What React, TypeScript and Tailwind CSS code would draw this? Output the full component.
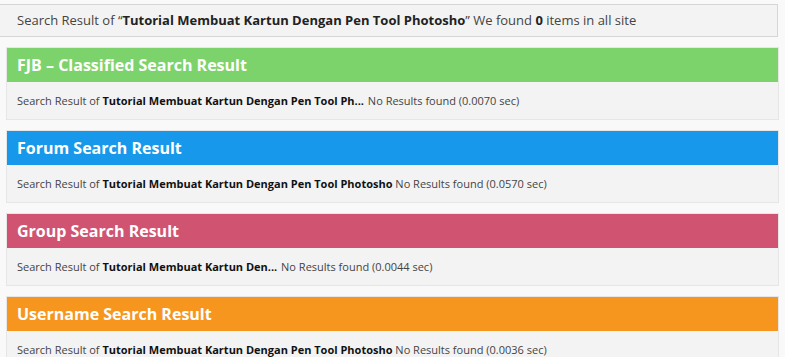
import React from "react";

const sections = [
  { title: "FJB – Classified Search Result", color: "bg-[#7dd36b]", query: "Tutorial Membuat Kartun Dengan Pen Tool Ph...", time: "0.0070", extra: true },
  { title: "Forum Search Result", color: "bg-[#1798ea]", query: "Tutorial Membuat Kartun Dengan Pen Tool Photosho", time: "0.0570", extra: false },
  { title: "Group Search Result", color: "bg-[#d05472]", query: "Tutorial Membuat Kartun Den...", time: "0.0044", extra: true },
  { title: "Username Search Result", color: "bg-[#f7961f]", query: "Tutorial Membuat Kartun Dengan Pen Tool Photosho", time: "0.0036", extra: false },
];

export default function App() {
  return (
    <div className="w-[785px] h-[357px] overflow-hidden bg-[#f9f9f9] text-[#333]" style={{ fontFamily: "'Open Sans', sans-serif" }}>
      <div className="pt-[4px] pr-[7px]">
        <div className="h-[33px] border border-l-0 border-[#d6d6d6] bg-[#f3f3f3] pl-[17px] flex items-center text-[13px] text-[#444]">
          <span>
            Search Result of “<b className="text-[#222]">Tutorial Membuat Kartun Dengan Pen Tool Photosho</b>” We found <b className="text-[#222]">0</b> items in all site
          </span>
        </div>
      </div>
      <div className="flex flex-col gap-[10px] pt-[10px] pl-[6px] pr-[6px]">
        {sections.map((s) => (
          <div key={s.title} className="border border-[#e6e6e6] bg-[#f3f3f3]">
            <div className={`${s.color} h-[34px] flex items-center pl-[10px] text-white font-bold text-[16px]`}>{s.title}</div>
            <div className="h-[37px] flex items-center pl-[10px] pt-[2px] text-[11px] text-[#444]">
              <span>
                Search Result of <b className="text-[#111]">{s.query}</b>
                <span className={s.extra ? "ml-[1px]" : ""}> No Results found ({s.time} sec)</span>
              </span>
            </div>
          </div>
        ))}
      </div>
    </div>
  );
}
